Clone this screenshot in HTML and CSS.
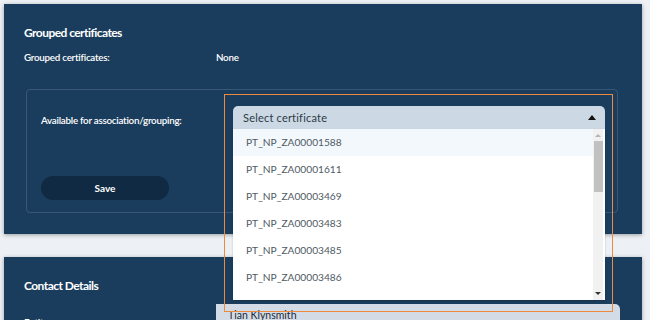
FILE: index.html
```html
<!DOCTYPE html>
<html lang="en">
<head>
    <meta charset="UTF-8">
    <meta name="viewport" content="width=device-width, initial-scale=1.0">
    <title>Certificate grouping</title>
    <link rel="stylesheet" href="styles.css">
</head>
<body>
    <div class="panel grouping">
        <h2 class="panel-title">Grouped certificates</h2>
        <div class="info-row">
            <span class="info-label">Grouped certificates:</span>
            <span class="info-value">None</span>
        </div>

        <div class="assoc-box">
            <div class="assoc-label">Available for association/grouping:</div>
            <div class="select-wrap">
                <div class="focus-ring"></div>
                <div class="select-head">
                    <span>Select certificate</span>
                    <span class="caret-up"></span>
                </div>
                <div class="select-menu">
                    <ul class="option-list">
                        <li class="option active">PT_NP_ZA00001588</li>
                        <li class="option">PT_NP_ZA00001611</li>
                        <li class="option">PT_NP_ZA00003469</li>
                        <li class="option">PT_NP_ZA00003483</li>
                        <li class="option">PT_NP_ZA00003485</li>
                        <li class="option">PT_NP_ZA00003486</li>
                    </ul>
                    <div class="scrollbar">
                        <span class="sb-arrow up"></span>
                        <span class="sb-thumb"></span>
                        <span class="sb-space"></span>
                        <span class="sb-arrow down"></span>
                    </div>
                </div>
            </div>
            <button class="save-btn">Save</button>
        </div>
    </div>

    <div class="panel contact">
        <h2 class="panel-title">Contact Details</h2>
        <div class="info-row field">
            <span class="info-label field-label">Entity name:</span>
            <div class="field-input">Tian Klynsmith</div>
        </div>
    </div>
</body>
</html>
```

FILE: styles.css
```css
body {
    font-family: 'Lato', 'Open Sans', sans-serif;
    margin: 0;
    background-color: #edf1f5;
    overflow: hidden;
    height: 320px;
}

.panel {
    background: #1b3d5d;
    margin: 4px 8px 0 4px;
    padding: 22px 20px;
    box-shadow: 0 1px 4px rgba(0,0,0,0.35);
    color: #fff;
}

.panel.grouping {
    height: 186px;
}

.panel.contact {
    margin-top: 23px;
    padding-top: 22px;
    height: 60px;
}

.panel-title {
    margin: 0;
    font-size: 12px;
    font-weight: 700;
    letter-spacing: -0.55px;
    line-height: 14px;
}

.info-row {
    display: grid;
    grid-template-columns: 192px 1fr;
    margin-top: 11px;
    font-size: 9.8px;
    font-weight: 600;
    line-height: 12px;
    letter-spacing: -0.25px;
}

/* 関連付けボックス */
.assoc-box {
    margin: 26px 4px 0 2px;
    padding: 16px 12px 12px 14px;
    border: 1px solid #395775;
    border-radius: 4px;
    display: grid;
    grid-template-columns: 192px 1fr;
    grid-template-rows: 23px auto;
    row-gap: 47px;
}

.assoc-label {
    font-size: 9.8px;
    font-weight: 600;
    letter-spacing: -0.25px;
    padding-top: 8px;
    line-height: 12px;
}

.select-wrap {
    position: relative;
}

.focus-ring {
    position: absolute;
    top: -12px;
    left: -9px;
    right: -8px;
    bottom: -183px;
    border: 1.5px solid #ef8a3c;
    z-index: 3;
    pointer-events: none;
}

.select-head {
    height: 23px;
    background: #ccd8e4;
    border-radius: 5px 5px 0 0;
    display: flex;
    align-items: center;
    justify-content: space-between;
    padding: 0 9px 0 10px;
    font-size: 11px;
    color: #2d3a46;
    letter-spacing: 0.2px;
}

.caret-up {
    width: 0;
    height: 0;
    border-left: 4px solid transparent;
    border-right: 4px solid transparent;
    border-bottom: 5px solid #111;
}

.select-menu {
    position: absolute;
    top: 23px;
    left: 0;
    right: 0;
    height: 171px;
    background: #fff;
    display: flex;
    z-index: 2;
    box-shadow: 0 1px 2px rgba(0,0,0,0.2);
}

.option-list {
    flex: 1;
    list-style: none;
    margin: 0;
    padding: 0;
    overflow: hidden;
}

.option {
    height: 27px;
    line-height: 27px;
    padding-left: 13px;
    font-size: 10.2px;
    color: #505a63;
}

.option.active {
    background: #f3f8fd;
}

.scrollbar {
    width: 10px;
    margin-right: 2px;
    background: #f1f1f1;
    display: flex;
    flex-direction: column;
    align-items: center;
}

.sb-arrow {
    width: 0;
    height: 0;
    border-left: 3px solid transparent;
    border-right: 3px solid transparent;
}

.sb-arrow.up {
    margin: 5px 0 4px;
    border-bottom: 3px solid #b5b5b5;
}

.sb-arrow.down {
    margin: 0 0 5px;
    border-top: 3px solid #333;
}

.sb-thumb {
    width: 9px;
    height: 51px;
    background: #c1c1c1;
}

.sb-space {
    flex: 1;
}

.save-btn {
    width: 128px;
    height: 24px;
    border: none;
    border-radius: 12px;
    background: #0f2a42;
    color: #fff;
    font-family: 'Lato', sans-serif;
    font-size: 10px;
    font-weight: 700;
    cursor: pointer;
}

/* 連絡先 */
.field {
    margin-top: 11px;
    align-items: start;
}

.field-label {
    padding-top: 12px;
}

.field-input {
    height: 20px;
    margin-right: 2px;
    background: #d3dce6;
    border-radius: 0 5px 0 0;
    color: #1c2a38;
    font-weight: 400;
    padding: 5px 12px 0;
    box-sizing: border-box;
    font-size: 10.5px;
    letter-spacing: 0;
}
```
